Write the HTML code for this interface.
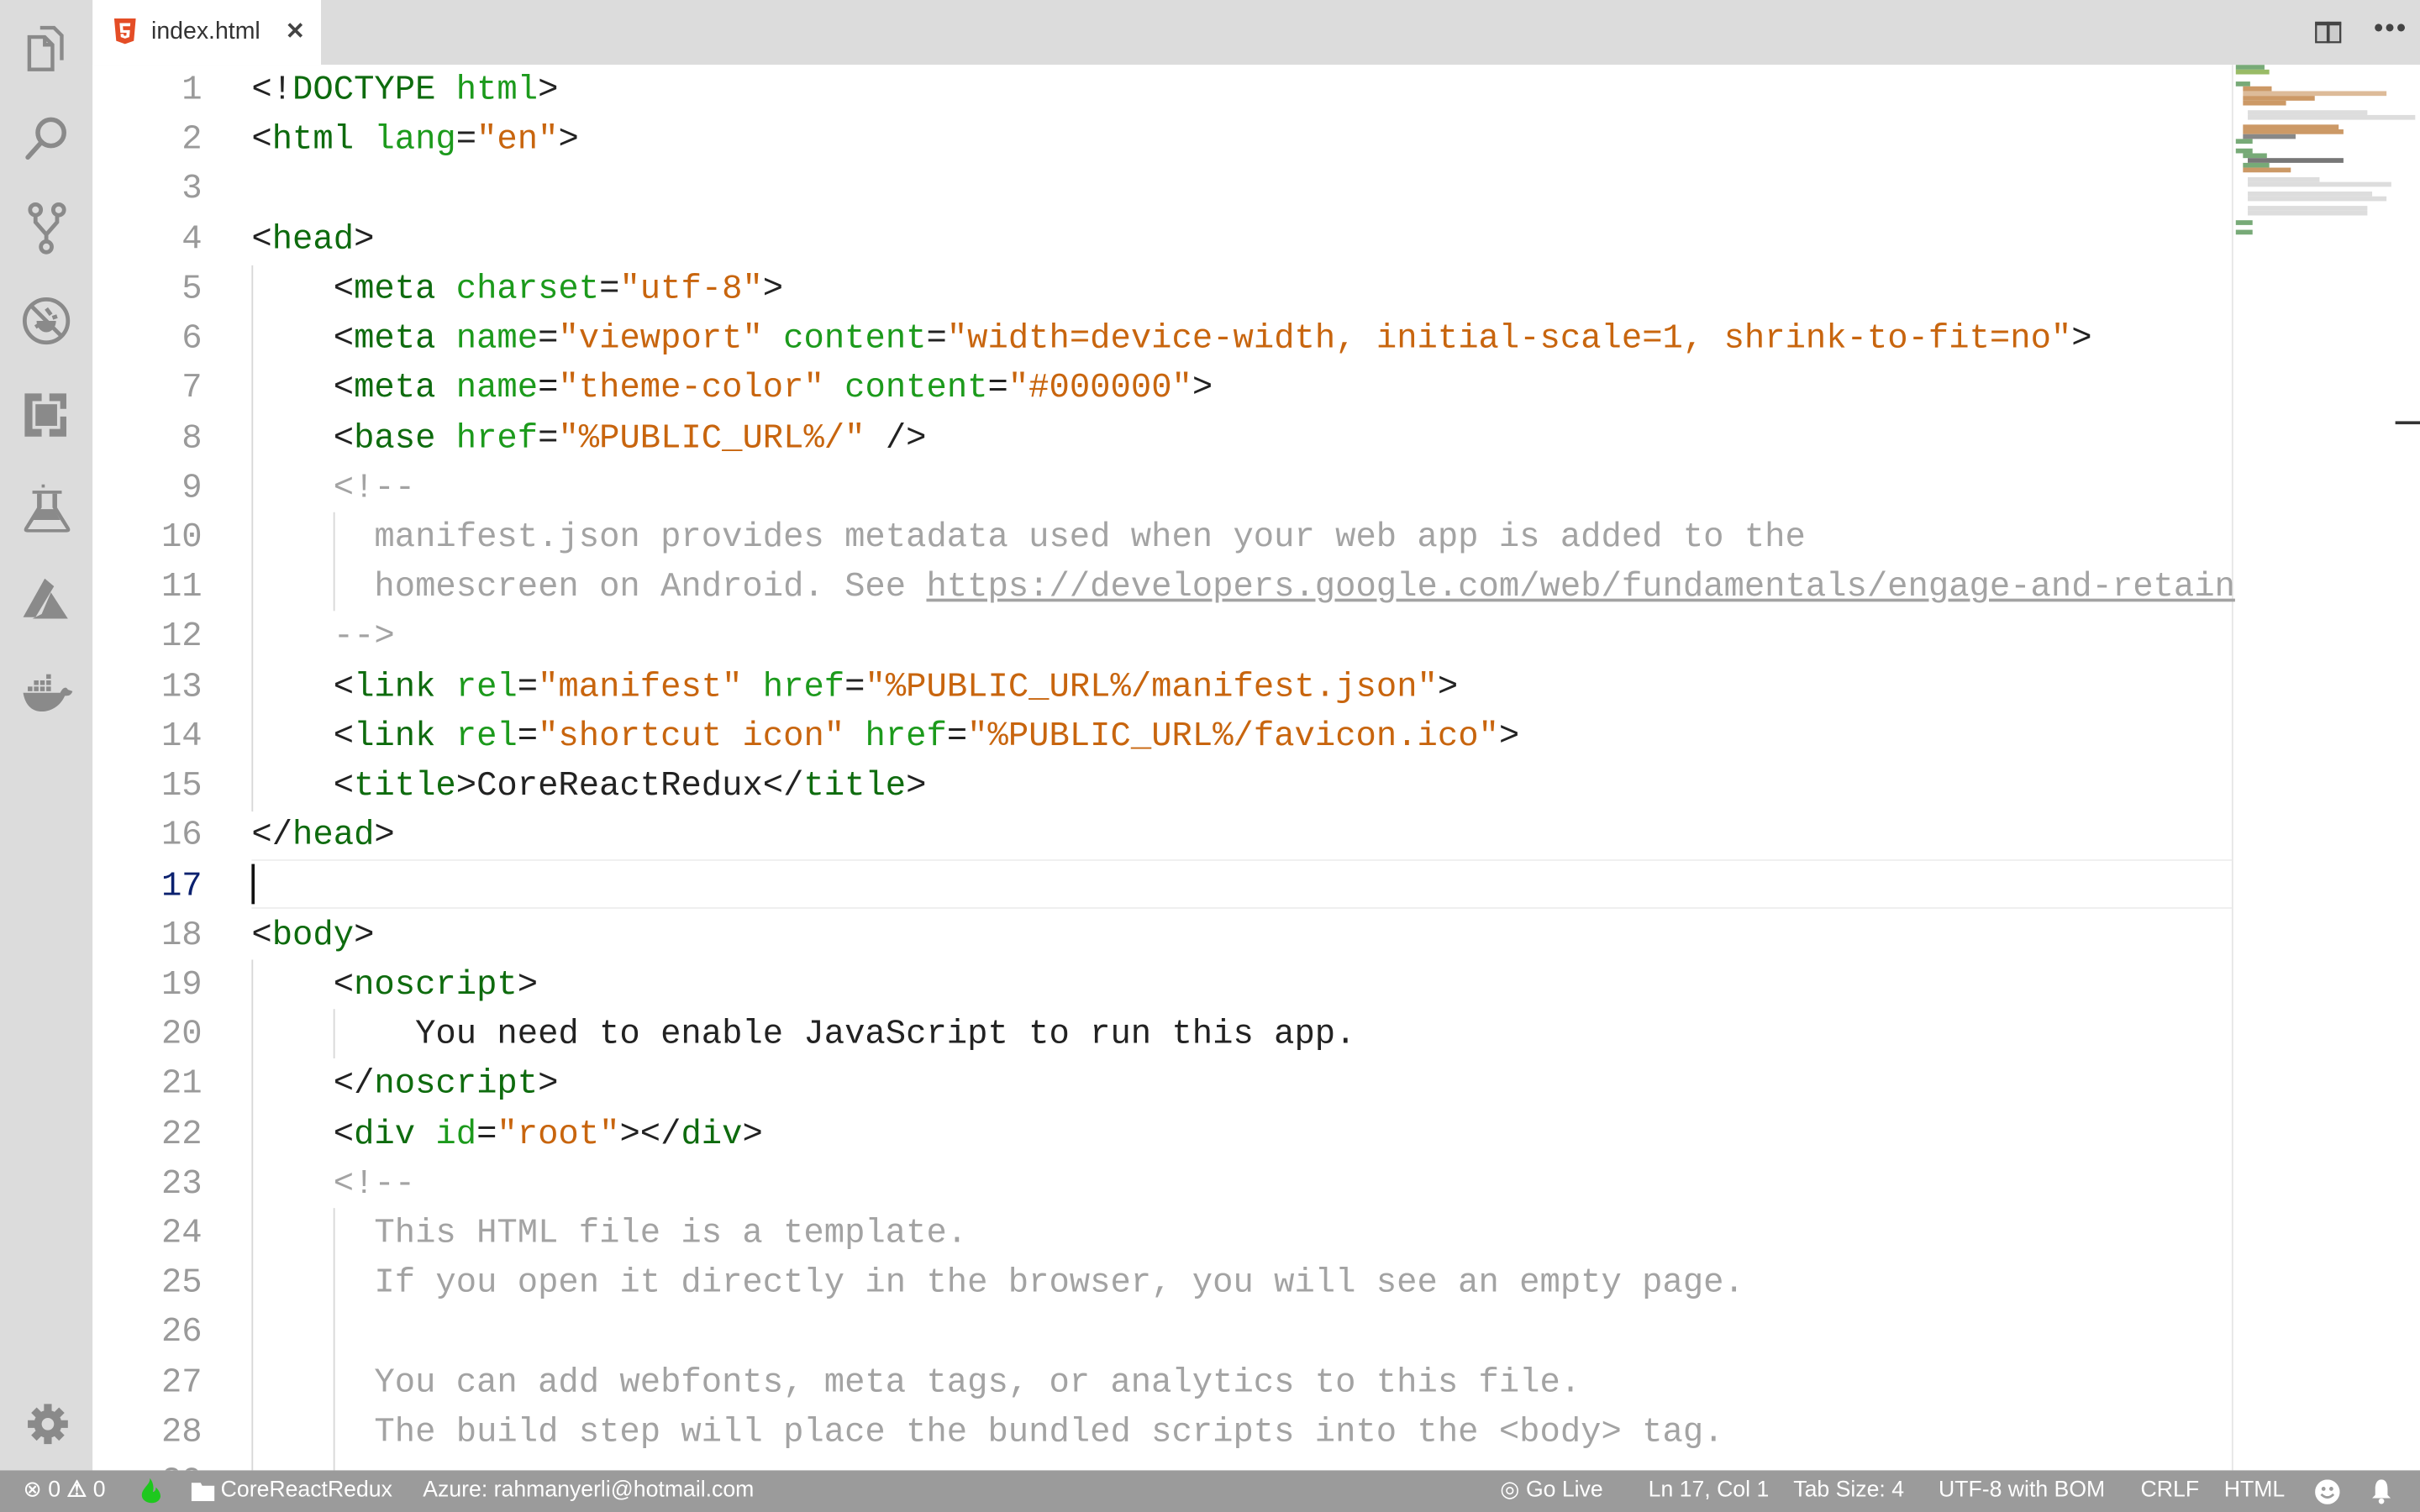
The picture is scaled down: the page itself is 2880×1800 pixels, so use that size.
<!DOCTYPE html>
<html><head><meta charset="utf-8"><style>
*{margin:0;padding:0;box-sizing:border-box}
html,body{width:2880px;height:1800px;overflow:hidden;background:#fff}
#w{position:absolute;left:0;top:0;width:1568px;height:980px;transform:scale(1.836735);transform-origin:0 0;font-family:"Liberation Sans",sans-serif}
#act{position:absolute;left:0;top:0;width:60px;height:953px;background:#dcdcdc}
#act svg{position:absolute;left:13px}
#tabs{position:absolute;left:60px;top:0;width:1508px;height:42px;background:#dcdcdc}
#tab{position:absolute;left:0;top:0;width:148px;height:42px;background:#fff}
#ed{position:absolute;left:60px;top:42px;width:1508px;height:911px;overflow:hidden;background:#fff}
.ln{position:absolute;left:0;width:71px;text-align:right;font:22.08px/32.22px "Liberation Mono",monospace;color:#9a9a9a}
.cl{position:absolute;left:103px;white-space:pre;font:22.08px/32.22px "Liberation Mono",monospace;color:#222}
.t{color:#0e6b0e}.a{color:#1c9a1c}.s{color:#c8650e}.c{color:#a3a3a3}.u{text-decoration:underline}
.g{position:absolute;width:1px;background:#d8d8d8}
#st{position:absolute;left:0;top:953px;width:1568px;height:27px;background:#9b9b9b;color:#fff;font-size:14.5px}
#st span{position:absolute;top:5px;white-space:nowrap}
#mm div{position:absolute;height:1.5px}
</style></head><body><div id="w">
<div id="act">
<svg style="top:14px" width="34" height="34" viewBox="0 0 34 34" fill="none" stroke="#8a8a8a" stroke-width="2.4"><path d="M13 4h9l5 5v16"/><path d="M6 10h10l5 5v16H6z"/><path d="M16 10v5h5"/></svg>
<svg style="top:72px" width="34" height="34" viewBox="0 0 34 34" fill="none" stroke="#8a8a8a" stroke-width="3"><circle cx="20" cy="14" r="8.5"/><path d="M14 20L5 30" stroke-linecap="round"/></svg>
<svg style="top:131px" width="34" height="36" viewBox="0 0 34 36" fill="none" stroke="#8a8a8a" stroke-width="2.6"><circle cx="10" cy="5" r="3.5"/><circle cx="25" cy="5" r="3.5"/><circle cx="17" cy="29" r="3.5"/><path d="M10 9v4l7 8 7-8V9M17 21v4"/></svg>
<svg style="top:191px" width="34" height="34" viewBox="0 0 34 34" fill="none" stroke="#8a8a8a" stroke-width="2.6"><circle cx="17" cy="17" r="14"/><path d="M7 7l20 20"/><path d="M12 17a5 6 0 0 0 10 0" fill="#8a8a8a"/><path d="M17 9l3 4M10 21l3-2M24 14l-3 1"/></svg>
<svg style="top:252px" width="34" height="34" viewBox="0 0 34 34" fill="#8a8a8a"><path d="M3 3h11v5H8v18h6v5H3z"/><path d="M19 3h11v10h-4V8h-7zM19 26h7v-8h4v13H19z"/><rect x="10" y="10" width="14" height="14"/></svg>
<svg style="top:312px" width="34" height="34" viewBox="0 0 34 34" fill="#8a8a8a"><rect x="14" y="2" width="2" height="2"/><rect x="8" y="6" width="19" height="2"/><path d="M11 8h3v9l-9 14h25L21 17V8h3v9l8 13c1 2 0 3-2 3H5c-2 0-3-1-2-3l8-13z"/><path d="M8 25l4-7h10l4 7z"/></svg>
<svg style="top:372px" width="34" height="34" viewBox="0 0 34 34" fill="#8a8a8a"><path d="M16 3L2 28h8L22 8z"/><path d="M20 12l-6 14 -6 3h23z"/></svg>
<svg style="top:432px" width="36" height="34" viewBox="0 0 36 34" fill="#8a8a8a"><path d="M2 17h24c2-4 4-4 5-2l3 1c-1 3-3 3-5 3-3 7-10 11-17 10-6-1-9-6-10-12z"/><rect x="5" y="13" width="3" height="3"/><rect x="9" y="13" width="3" height="3"/><rect x="13" y="13" width="3" height="3"/><rect x="17" y="13" width="3" height="3"/><rect x="9" y="9" width="3" height="3"/><rect x="13" y="9" width="3" height="3"/><rect x="17" y="9" width="3" height="3"/><rect x="17" y="5" width="3" height="3"/></svg>
<svg style="top:908px;left:16px" width="30" height="30" viewBox="0 0 30 30"><g fill="#8a8a8a"><circle cx="15" cy="15" r="9"/><g stroke="#8a8a8a" stroke-width="5"><path d="M15 2v26M2 15h26M6 6l18 18M24 6L6 24"/></g></g><circle cx="15" cy="15" r="4" fill="#dcdcdc"/></svg>
</div>
<div id="tabs"><div id="tab">
<svg style="position:absolute;left:14px;top:12px" width="14" height="17" viewBox="0 0 14 17"><path d="M0 0h14l-1.3 14.5L7 16.5 1.3 14.5z" fill="#e44d26"/><path d="M3.5 3h7l-.2 2H5.6l.2 2.5h4.4l-.4 4.5L7 13l-2.7-1-.2-2h2l.1 1L7 11.3l.9-.3.1-1.8H4z" fill="#fff"/></svg>
<span style="position:absolute;left:38px;top:12px;font-size:15.5px;color:#333">index.html</span>
<span style="position:absolute;left:125px;top:11px;font-size:15px;color:#444;font-weight:bold">✕</span>
</div>
<svg style="position:absolute;left:1440px;top:14px" width="17" height="14" viewBox="0 0 17 14"><rect x="0.5" y="0.5" width="16" height="13" fill="#ccc" stroke="#444" stroke-width="1.5"/><path d="M8.5 0v14M0 1.5h17" stroke="#444" stroke-width="2"/></svg>
<span style="position:absolute;left:1478px;top:8px;font-size:18px;color:#444;letter-spacing:1px">•••</span>
</div>
<div id="ed">
<div style="position:absolute;left:103px;top:515px;width:1283px;height:32px;border-top:1.5px solid #eee;border-bottom:1.5px solid #eee"></div>
<div style="position:absolute;left:103px;top:518px;width:2px;height:26px;background:#111"></div>
<div class="g" style="left:103px;top:130px;height:354px"></div>
<div class="g" style="left:156px;top:290px;height:64px"></div>
<div class="g" style="left:103px;top:580px;height:340px"></div>
<div class="g" style="left:156px;top:612px;height:32px"></div>
<div class="g" style="left:156px;top:741px;height:180px"></div>
<div class="g" style="left:1386px;top:0;height:911px;background:#e6e6e6"></div>
<div style="position:absolute;left:1492px;top:231px;width:16px;height:2px;background:#333"></div>
<div id="mm" style="position:absolute;left:1384px;top:0;transform:scale(1.55);transform-origin:0 0">
<div style="left:3px;top:0;width:12px;background:#7a7"></div><div style="left:3px;top:2px;width:14px;background:#9b6"></div>
<div style="left:3px;top:7px;width:6px;background:#7a7"></div>
<div style="left:6px;top:9px;width:12px;background:#c96"></div><div style="left:6px;top:11px;width:60px;background:#db9"></div><div style="left:6px;top:13px;width:30px;background:#c96"></div><div style="left:6px;top:15px;width:18px;background:#c96"></div>
<div style="left:8px;top:19px;width:50px;background:#ddd"></div><div style="left:8px;top:21px;width:70px;background:#ddd"></div>
<div style="left:6px;top:25px;width:40px;background:#c96"></div><div style="left:6px;top:27px;width:42px;background:#c96"></div><div style="left:6px;top:29px;width:22px;background:#888"></div>
<div style="left:3px;top:31px;width:7px;background:#7a7"></div>
<div style="left:3px;top:35px;width:7px;background:#7a7"></div><div style="left:6px;top:37px;width:10px;background:#7a7"></div><div style="left:8px;top:39px;width:40px;background:#777"></div><div style="left:6px;top:41px;width:11px;background:#7a7"></div><div style="left:6px;top:43px;width:20px;background:#c96"></div>
<div style="left:8px;top:47px;width:30px;background:#ddd"></div><div style="left:8px;top:49px;width:60px;background:#ddd"></div><div style="left:8px;top:53px;width:52px;background:#ddd"></div><div style="left:8px;top:55px;width:58px;background:#ddd"></div><div style="left:8px;top:59px;width:50px;background:#ddd"></div><div style="left:8px;top:61px;width:50px;background:#ddd"></div>
<div style="left:3px;top:65px;width:7px;background:#7a7"></div><div style="left:3px;top:69px;width:7px;background:#7a7"></div>
</div>
<div class="ln" style="top:1px">1<br>2<br>3<br>4<br>5<br>6<br>7<br>8<br>9<br>10<br>11<br>12<br>13<br>14<br>15<br>16<br><span style="color:#0b216f">17</span><br>18<br>19<br>20<br>21<br>22<br>23<br>24<br>25<br>26<br>27<br>28<br>29</div>
<div class="cl" style="top:1px"><span class="p">&lt;!</span><span class="t">DOCTYPE</span> <span class="a">html</span>&gt;
&lt;<span class="t">html</span> <span class="a">lang</span>=<span class="s">"en"</span>&gt;

&lt;<span class="t">head</span>&gt;
    &lt;<span class="t">meta</span> <span class="a">charset</span>=<span class="s">"utf-8"</span>&gt;
    &lt;<span class="t">meta</span> <span class="a">name</span>=<span class="s">"viewport"</span> <span class="a">content</span>=<span class="s">"width=device-width, initial-scale=1, shrink-to-fit=no"</span>&gt;
    &lt;<span class="t">meta</span> <span class="a">name</span>=<span class="s">"theme-color"</span> <span class="a">content</span>=<span class="s">"#000000"</span>&gt;
    &lt;<span class="t">base</span> <span class="a">href</span>=<span class="s">"%PUBLIC_URL%/"</span> /&gt;
<span class="c">    &lt;!--
      manifest.json provides metadata used when your web app is added to the
      homescreen on Android. See <span class="u">https://developers.google.com/web/fundamentals/engage-and-retain</span>
    --&gt;</span>
    &lt;<span class="t">link</span> <span class="a">rel</span>=<span class="s">"manifest"</span> <span class="a">href</span>=<span class="s">"%PUBLIC_URL%/manifest.json"</span>&gt;
    &lt;<span class="t">link</span> <span class="a">rel</span>=<span class="s">"shortcut icon"</span> <span class="a">href</span>=<span class="s">"%PUBLIC_URL%/favicon.ico"</span>&gt;
    &lt;<span class="t">title</span>&gt;CoreReactRedux&lt;/<span class="t">title</span>&gt;
&lt;/<span class="t">head</span>&gt;

&lt;<span class="t">body</span>&gt;
    &lt;<span class="t">noscript</span>&gt;
        You need to enable JavaScript to run this app.
    &lt;/<span class="t">noscript</span>&gt;
    &lt;<span class="t">div</span> <span class="a">id</span>=<span class="s">"root"</span>&gt;&lt;/<span class="t">div</span>&gt;
<span class="c">    &lt;!--
      This HTML file is a template.
      If you open it directly in the browser, you will see an empty page.

      You can add webfonts, meta tags, or analytics to this file.
      The build step will place the bundled scripts into the &lt;body&gt; tag.
</span></div>
</div>
<div id="st">
<span style="left:15px">⊗ 0 <b>⚠</b> 0</span>
<svg style="position:absolute;left:91px;top:5px" width="14" height="18" viewBox="0 0 14 18"><path d="M6 0c1 4-6 7-5 12 1 5 11 6 12 0 0-3-2-5-3-6 0 2-1 3-2 3 1-3 0-7-2-9z" fill="#1ec81e"/></svg>
<svg style="position:absolute;left:124px;top:8px" width="15" height="12" viewBox="0 0 15 12"><path d="M0 0h6l1 2h8v10H0z" fill="#fff"/></svg>
<span style="left:143px">CoreReactRedux</span>
<span style="left:274px">Azure: rahmanyerli@hotmail.com</span>
<span style="left:972px">◎ Go Live</span>
<span style="left:1068px">Ln 17, Col 1</span>
<span style="left:1162px">Tab Size: 4</span>
<span style="left:1256px">UTF-8 with BOM</span>
<span style="left:1387px">CRLF</span>
<span style="left:1441px">HTML</span>
<svg style="position:absolute;left:1500px;top:6px" width="16" height="16" viewBox="0 0 16 16"><circle cx="8" cy="8" r="8" fill="#fff"/><circle cx="5.5" cy="6" r="1.3" fill="#9b9b9b"/><circle cx="10.5" cy="6" r="1.3" fill="#9b9b9b"/><path d="M4 9.5q4 4 8 0" stroke="#9b9b9b" stroke-width="1.5" fill="none"/></svg>
<svg style="position:absolute;left:1536px;top:5px" width="14" height="17" viewBox="0 0 14 17"><path d="M7 1c3 0 4 3 4 6v4l2 2H1l2-2V7c0-3 1-6 4-6z" fill="#fff"/><circle cx="7" cy="15" r="1.8" fill="#fff"/></svg>
</div>
</div></body></html>
